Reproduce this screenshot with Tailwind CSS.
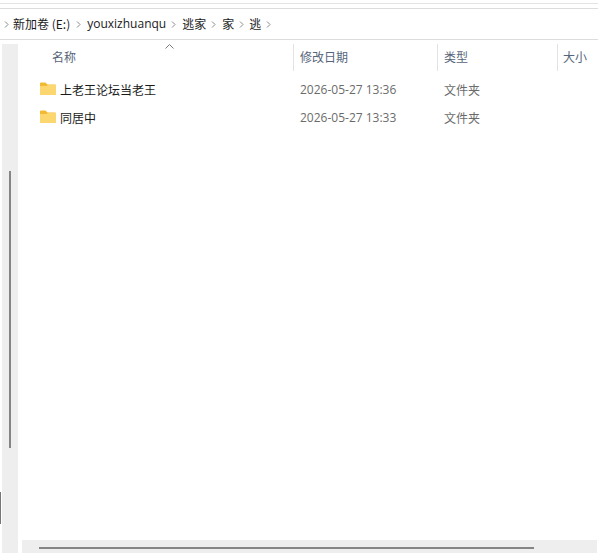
<!DOCTYPE html>
<html lang="zh-CN">
<head>
  <meta charset="UTF-8" />
  <title>逃</title>
  <script src="https://cdn.jsdelivr.net/npm/@tailwindcss/browser@4"></script>
</head>
<body class="bg-white h-[553px] w-[598px] overflow-hidden font-['Noto_Sans_CJK_SC','Noto_Sans',sans-serif] text-[12px] relative">

  <!-- top lines -->
  <div class="h-[4px] border-b border-[#e3e3e3]"></div>
  <div class="h-[5px] border-b border-[#dcdcdc]"></div>

  <!-- breadcrumb -->
  <div class="h-[31px] border-b border-[#dcdcdc] flex items-center pl-[4px] text-[#1a1a1a]">
    <svg class="w-[5px] h-[7px] mr-[4px]" viewBox="0 0 5 7" fill="none" stroke="#8a8a8a"><path d="M1 .5l3 3-3 3"/></svg>
    <span>新加卷 (E:)</span>
    <svg class="w-[5px] h-[7px] mx-[6px]" viewBox="0 0 5 7" fill="none" stroke="#8a8a8a"><path d="M1 .5l3 3-3 3"/></svg>
    <span class="font-['Open_Sans','Noto_Sans',sans-serif]">youxizhuanqu</span>
    <svg class="w-[5px] h-[7px] ml-[5px] mr-[6px]" viewBox="0 0 5 7" fill="none" stroke="#8a8a8a"><path d="M1 .5l3 3-3 3"/></svg>
    <span>逃家</span>
    <svg class="w-[5px] h-[7px] ml-[5px] mr-[6px]" viewBox="0 0 5 7" fill="none" stroke="#8a8a8a"><path d="M1 .5l3 3-3 3"/></svg>
    <span>家</span>
    <svg class="w-[5px] h-[7px] mx-[5px]" viewBox="0 0 5 7" fill="none" stroke="#8a8a8a"><path d="M1 .5l3 3-3 3"/></svg>
    <span>逃</span>
    <svg class="w-[5px] h-[7px] ml-[5px]" viewBox="0 0 5 7" fill="none" stroke="#8a8a8a"><path d="M1 .5l3 3-3 3"/></svg>
  </div>

  <div class="flex h-[513px]">
    <!-- left scrollbar -->
    <div class="w-[20px] pt-[4px] shrink-0 flex">
      <div class="ml-[2px] w-[16px] bg-[#eeeeee] pt-[127px] pl-[7px]">
        <div class="w-[2px] h-[277px] bg-[#858585]"></div>
      </div>
    </div>

    <!-- file list -->
    <div class="flex-1 flex flex-col min-w-0">
      <div class="flex h-[27px] mt-[4px] text-[#56657a] relative">
        <svg class="absolute left-[145px] top-0 w-[9px] h-[5px]" viewBox="0 0 9 5" fill="none" stroke="#7a7a7a"><path d="M.5 4.5l4-4 4 4"/></svg>
        <div class="w-[274px] pl-[32px] pb-[2px] flex items-center border-r border-[#e3e3e3]">名称</div>
        <div class="w-[144px] pl-[6px] pb-[2px] flex items-center border-r border-[#e3e3e3]">修改日期</div>
        <div class="w-[120px] pl-[6px] pb-[2px] flex items-center border-r border-[#e3e3e3]">类型</div>
        <div class="pl-[5px] pb-[2px] flex items-center">大小</div>
      </div>

      <div class="flex h-[28px] items-center mt-[5px] text-[#6b6b6b]">
        <div class="w-[280px] pl-[20px] flex items-center text-[#1a1a1a]">
          <svg class="w-[16px] h-[13px] mr-[4px] -mt-[3px]" viewBox="0 0 16 13"><path d="M0 1.5A1 1 0 0 1 1 .5h4.5l2 2H15a1 1 0 0 1 1 1V12a1 1 0 0 1-1 1H1a1 1 0 0 1-1-1z" fill="#f2b933"/><path d="M0 4h6.5L8 3h8v9a1 1 0 0 1-1 1H1a1 1 0 0 1-1-1z" fill="#fcd770"/></svg>
          <span>上老王论坛当老王</span>
        </div>
        <div class="w-[144px] font-['Open_Sans','Noto_Sans',sans-serif]">2026-05-27 13:36</div>
        <div>文件夹</div>
      </div>
      <div class="flex h-[28px] items-center text-[#6b6b6b]">
        <div class="w-[280px] pl-[20px] flex items-center text-[#1a1a1a]">
          <svg class="w-[16px] h-[13px] mr-[4px] -mt-[3px]" viewBox="0 0 16 13"><path d="M0 1.5A1 1 0 0 1 1 .5h4.5l2 2H15a1 1 0 0 1 1 1V12a1 1 0 0 1-1 1H1a1 1 0 0 1-1-1z" fill="#f2b933"/><path d="M0 4h6.5L8 3h8v9a1 1 0 0 1-1 1H1a1 1 0 0 1-1-1z" fill="#fcd770"/></svg>
          <span>同居中</span>
        </div>
        <div class="w-[144px] font-['Open_Sans','Noto_Sans',sans-serif]">2026-05-27 13:33</div>
        <div>文件夹</div>
      </div>

      <!-- bottom scrollbar -->
      <div class="mt-auto ml-[2px] mr-[1px] h-[13px] bg-[#eeeeee] pt-[7px] pl-[17px]">
        <div class="w-[495px] h-[2px] bg-[#858585]"></div>
      </div>
    </div>
  </div>

  <!-- window edge sliver -->
  <div class="absolute left-0 top-[492px] w-[1px] h-[32px] bg-[#777777]"></div>
</body>
</html>
